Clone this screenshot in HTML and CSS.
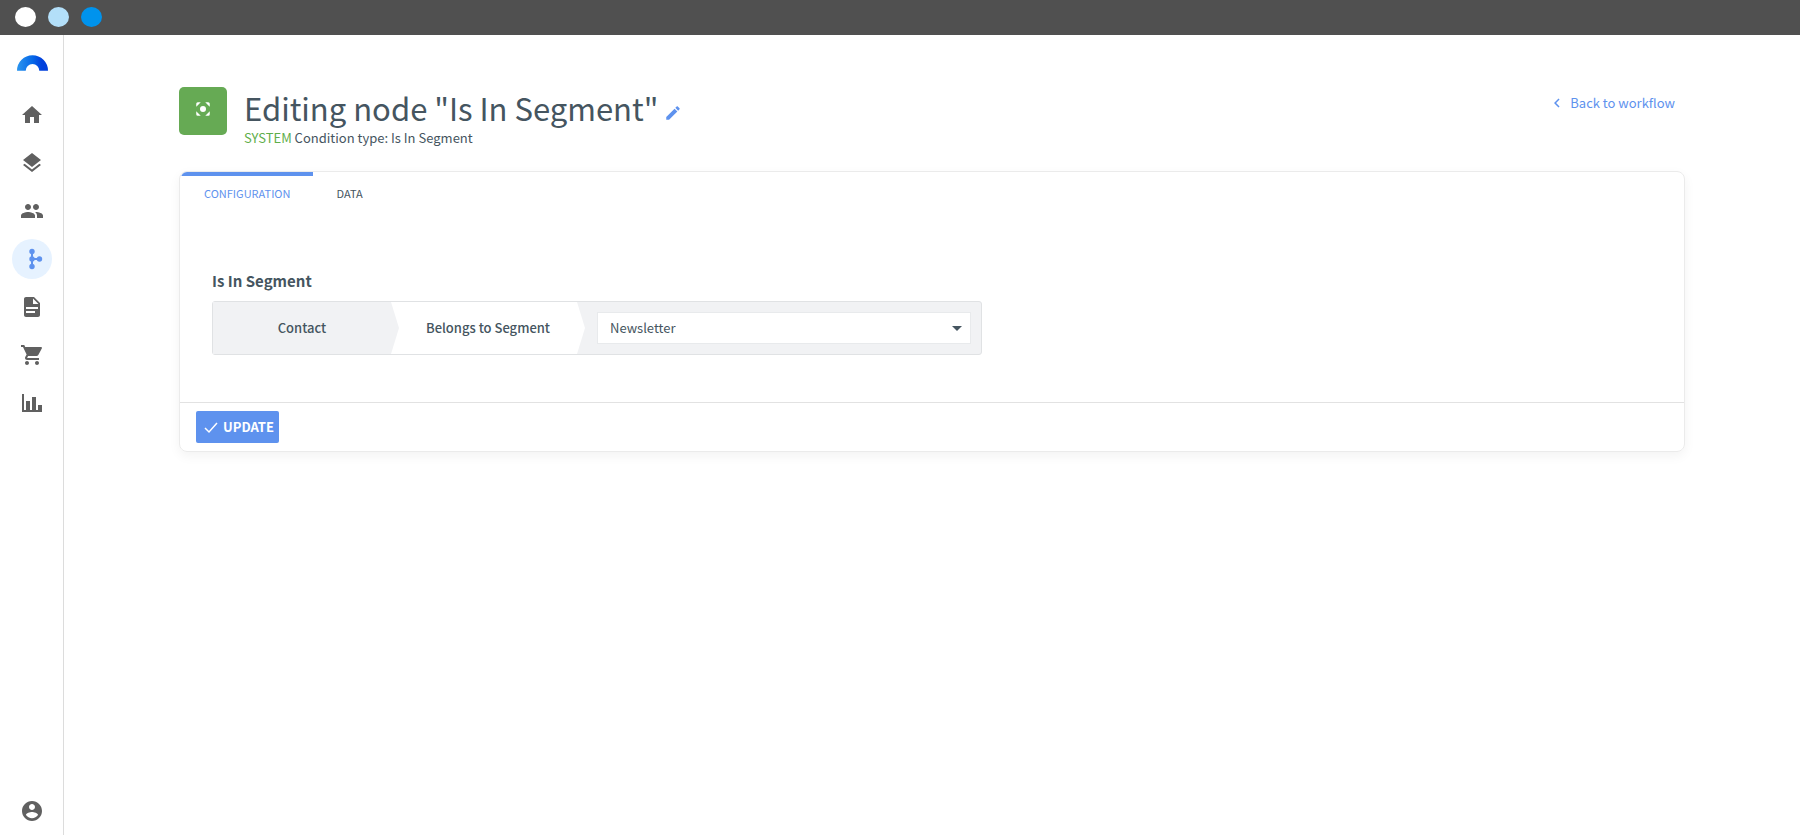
FILE: index.html
```
<!DOCTYPE html>
<html lang="en">
<head>
    <meta charset="UTF-8">
    <meta name="viewport" content="width=device-width, initial-scale=1.0">
    <title>Editing node "Is In Segment"</title>
    <link rel="stylesheet" href="styles.css">
</head>
<body>

    <div class="titlebar">
        <span class="dot dot-white"></span>
        <span class="dot dot-light"></span>
        <span class="dot dot-blue"></span>
    </div>

    <div class="layout">
        <nav class="sidebar" aria-label="Main menu">
            <a class="logo" href="#" aria-label="Dashboard">
                <svg width="31" height="16" viewBox="0 0 32 16">
                    <defs>
                        <linearGradient id="arc" x1="0" x2="1" y1="0" y2="0">
                            <stop offset="0" stop-color="#2b95ee"/>
                            <stop offset="0.5" stop-color="#0668e8"/>
                            <stop offset="0.8" stop-color="#0140dc"/>
                        </linearGradient>
                    </defs>
                    <path fill="url(#arc)" d="M0 16a16 16 0 0 1 32 0h-9a7 7 0 0 0-14 0z"/>
                </svg>
            </a>
            <a class="nav-link" href="#" aria-label="Home">
                <svg class="icon" viewBox="0 0 24 24"><path d="M10 20v-6h4v6h5v-8h3L12 3 2 12h3v8z"/></svg>
            </a>
            <a class="nav-link" href="#" aria-label="Layers">
                <svg class="icon" viewBox="0 0 24 24"><path d="M11.99 18.54l-7.37-5.73L3 14.07l9 7 9-7-1.63-1.27-7.38 5.74zM12 16l7.36-5.73L21 9l-9-7-9 7 1.63 1.27L12 16z"/></svg>
            </a>
            <a class="nav-link" href="#" aria-label="Contacts">
                <svg class="icon" viewBox="0 0 24 24"><path d="M16 11c1.66 0 2.99-1.34 2.99-3S17.66 5 16 5c-1.66 0-3 1.34-3 3s1.34 3 3 3zm-8 0c1.66 0 2.99-1.34 2.99-3S9.66 5 8 5C6.34 5 5 6.34 5 8s1.34 3 3 3zm0 2c-2.33 0-7 1.17-7 3.5V19h14v-2.5c0-2.33-4.67-3.5-7-3.5zm8 0c-.29 0-.62.02-.97.05 1.16.84 1.97 1.97 1.97 3.45V19h6v-2.5c0-2.33-4.67-3.5-7-3.5z"/></svg>
            </a>
            <a class="nav-link active" href="#" aria-label="Workflows">
                <svg class="icon" viewBox="0 0 24 24">
                    <path d="M11 4h2v7h6v2h-6v7h-2z"/>
                    <circle cx="12" cy="4.5" r="2.7"/>
                    <circle cx="12" cy="12" r="2.7"/>
                    <circle cx="12" cy="19.5" r="2.7"/>
                    <circle cx="19.5" cy="12" r="2.7"/>
                </svg>
            </a>
            <a class="nav-link" href="#" aria-label="Documents">
                <svg class="icon" viewBox="0 0 24 24"><path d="M14 2H6c-1.1 0-1.99.9-1.99 2L4 20c0 1.1.89 2 1.99 2H18c1.1 0 2-.9 2-2V8l-6-6zm2 16H6v-2h9v2zm2-4H6v-2h12v2zm-5-5V3.500L18.500 9H13z"/></svg>
            </a>
            <a class="nav-link" href="#" aria-label="Shop">
                <svg class="icon" viewBox="0 0 24 24"><path d="M7 18c-1.1 0-1.99.9-1.99 2S5.900 22 7 22s2-.9 2-2-.9-2-2-2zM1 2v2h2l3.600 7.590-1.350 2.450c-.16.28-.25.61-.25.960 0 1.100.9 2 2 2h12v-2H7.420c-.14 0-.25-.11-.25-.25l.03-.12.9-1.630h8.450c.75 0 1.410-.41 1.750-1.030L21.800 5.500c.4-.8-.1-1.500-.8-1.500H5.210l-.94-2H1zm16 16c-1.100 0-1.990.9-1.990 2s.89 2 1.990 2 2-.9 2-2-.9-2-2-2z"/></svg>
            </a>
            <a class="nav-link" href="#" aria-label="Statistics">
                <svg class="icon" viewBox="0 0 24 24"><path d="M2 3h2v16h2v-9h4v9h2V6h4v13h2v-5h4v7H2z"/></svg>
            </a>
            <a class="nav-link account" href="#" aria-label="Account">
                <svg class="icon" viewBox="0 0 24 24"><path d="M12 2C6.480 2 2 6.480 2 12s4.480 10 10 10 10-4.480 10-10S17.520 2 12 2zm0 3c1.660 0 3 1.340 3 3s-1.340 3-3 3-3-1.340-3-3 1.340-3 3-3zm0 14.200c-2.500 0-4.710-1.280-6-3.220.03-1.990 4-3.080 6-3.080 1.990 0 5.970 1.090 6 3.080-1.290 1.940-3.500 3.220-6 3.220z"/></svg>
            </a>
        </nav>

        <main class="content">
            <header class="page-header">
                <div class="node-icon">
                    <svg width="18" height="18" viewBox="0 0 24 24">
                        <circle cx="12" cy="12" r="4"/>
                        <path d="M3 9V5a2 2 0 0 1 2-2h4zM15 3h4a2 2 0 0 1 2 2v4zM3 15v4a2 2 0 0 0 2 2h4zM21 15v4a2 2 0 0 1-2 2h-4z"/>
                    </svg>
                </div>
                <div class="page-title">
                    <div class="title-row">
                        <h1>Editing node "Is In Segment"</h1>
                        <button class="edit-button" type="button" aria-label="Rename node">
                            <svg width="18" height="18" viewBox="0 0 24 24"><path d="M3 17.250V21h3.750L17.810 9.940l-3.750-3.750L3 17.250zM20.710 7.040c.39-.39.39-1.020 0-1.410l-2.340-2.340c-.39-.39-1.020-.39-1.410 0l-1.830 1.830 3.750 3.750 1.830-1.830z"/></svg>
                        </button>
                    </div>
                    <p class="subtitle"><span class="system">SYSTEM</span> Condition type: Is In Segment</p>
                </div>
                <a class="back-link" href="#">
                    <svg width="18" height="18" viewBox="0 0 24 24"><path d="M15.410 7.410L14 6l-6 6 6 6 1.410-1.410L10.830 12z"/></svg>
                    Back to workflow
                </a>
            </header>

            <section class="card">
                <div class="tabs" role="tablist">
                    <button class="tab selected" type="button" role="tab" aria-selected="true">CONFIGURATION</button>
                    <button class="tab" type="button" role="tab" aria-selected="false">DATA</button>
                </div>

                <div class="card-body">
                    <h2>Is In Segment</h2>
                    <div class="condition">
                        <div class="step step-first">Contact</div>
                        <label class="step step-second" for="segment">Belongs to Segment</label>
                        <div class="step-value">
                            <select id="segment">
                                <option>Newsletter</option>
                            </select>
                            <svg class="caret" width="10" height="5" viewBox="0 0 10 5"><path d="M0 0h10L5 5z"/></svg>
                        </div>
                    </div>
                </div>

                <footer class="card-footer">
                    <button class="update-button" type="button">
                        <svg width="16" height="16" viewBox="0 0 16 16"><path d="M2 9l4 4 8-9"/></svg>
                        UPDATE
                    </button>
                </footer>
            </section>
        </main>
    </div>

</body>
</html>
```
FILE: styles.css
```
* {
    box-sizing: border-box;
}

body {
    margin: 0;
    min-height: 100vh;
    display: flex;
    flex-direction: column;
    font-family: "Noto Sans CJK JP", "Open Sans", sans-serif;
    font-size: 13px;
    line-height: 20px;
    color: #455560;
    background: #fff;
}

h1, h2, p {
    margin: 0;
}

a {
    text-decoration: none;
}

button, select {
    font: inherit;
    color: inherit;
    border: none;
    cursor: pointer;
}

svg {
    display: block;
    fill: currentColor;
}

/* Window bar */
.titlebar {
    display: flex;
    align-items: center;
    gap: 12px;
    height: 35px;
    padding: 0 15px 1px;
    background: #505050;
}

.dot {
    width: 21px;
    height: 20px;
    border-radius: 50%;
}

.dot-white {
    background: #fff;
}

.dot-light {
    background: #b3dff9;
}

.dot-blue {
    background: #0093ed;
}

.layout {
    flex: 1;
    display: flex;
}

/* Sidebar */
.sidebar {
    display: flex;
    flex-direction: column;
    align-items: center;
    gap: 8px;
    width: 64px;
    padding: 20px 0 4px;
    border-right: 1px solid #dcdcdc;
}

.logo {
    margin: 0 0 16px 1px;
}

.nav-link {
    display: flex;
    align-items: center;
    justify-content: center;
    width: 40px;
    height: 40px;
    border-radius: 50%;
    color: #606060;
}

.nav-link.active {
    background: #e6f2ff;
    color: #5e92ee;
}

.icon {
    width: 24px;
    height: 24px;
}

.account {
    margin-top: auto;
}

/* Header */
.content {
    flex: 1;
    padding: 52px 115px;
}

.page-header {
    display: flex;
    align-items: flex-start;
    margin-bottom: 23px;
}

.node-icon {
    display: flex;
    justify-content: center;
    width: 48px;
    height: 48px;
    padding-top: 13px;
    margin-right: 17px;
    border-radius: 5px;
    background: #66aa54;
    color: #fff;
}

.title-row {
    display: flex;
    align-items: center;
    gap: 6px;
}

h1 {
    font-size: 31px;
    font-weight: 400;
    line-height: 41px;
}

.edit-button {
    padding: 10px 0 0;
    background: none;
    color: #5e92ee;
}

.system {
    color: #5fae4b;
}

.back-link {
    display: flex;
    align-items: center;
    gap: 4px;
    margin-left: auto;
    padding: 6px 10px 0;
    color: #5e92ee;
}

/* Card */
.card {
    border: 1px solid #ebebeb;
    border-radius: 8px;
    box-shadow: 0 4px 12px rgba(0, 0, 0, 0.05);
}

.tabs {
    display: flex;
    padding: 0 1px;
}

.tab {
    padding: 7px 23px 12px;
    border-top: 4px solid transparent;
    background: none;
    font-size: 11px;
}

.tab.selected {
    background: linear-gradient(#5e92ee, #5e92ee) top / 100% 4px no-repeat border-box;
    border-radius: 6px 0 0 0;
    color: #5e92ee;
}

.card-body {
    padding: 54px 32px 47px;
}

h2 {
    margin-bottom: 8px;
    font-size: 15px;
    font-weight: 700;
    line-height: 24px;
}

.condition {
    display: flex;
    max-width: 770px;
    height: 54px;
    border: 1px solid #e0e2e4;
    border-radius: 3px;
    background: #f1f2f4;
}

.step {
    display: flex;
    align-items: center;
    justify-content: center;
    width: 186px;
    font-weight: 500;
    clip-path: polygon(0 0, calc(100% - 8px) 0, 100% 50%, calc(100% - 8px) 100%, 0 100%);
}

.step-first {
    z-index: 1;
    padding-right: 8px;
    background: #f1f2f4;
}

.step-second {
    width: 194px;
    margin-left: -8px;
    background: #fff;
}

.step-value {
    position: relative;
    flex: 1;
    padding: 10px 10px 10px 12px;
}

.step-value select {
    width: 100%;
    height: 100%;
    padding: 0 12px;
    border: 1px solid #e8eaec;
    border-radius: 0;
    background: #fff;
    appearance: none;
}

.caret {
    position: absolute;
    top: 24px;
    right: 19px;
    pointer-events: none;
}

.card-footer {
    padding: 8px 16px;
    border-top: 1px solid #e2e2e2;
}

.update-button {
    display: flex;
    align-items: center;
    gap: 4px;
    height: 32px;
    padding: 0 5px 0 7px;
    border-radius: 2px;
    background: #5e92ee;
    color: #fff;
    font-weight: 700;
}

.update-button svg {
    fill: none;
    stroke: currentColor;
    stroke-width: 1.5;
}
```
